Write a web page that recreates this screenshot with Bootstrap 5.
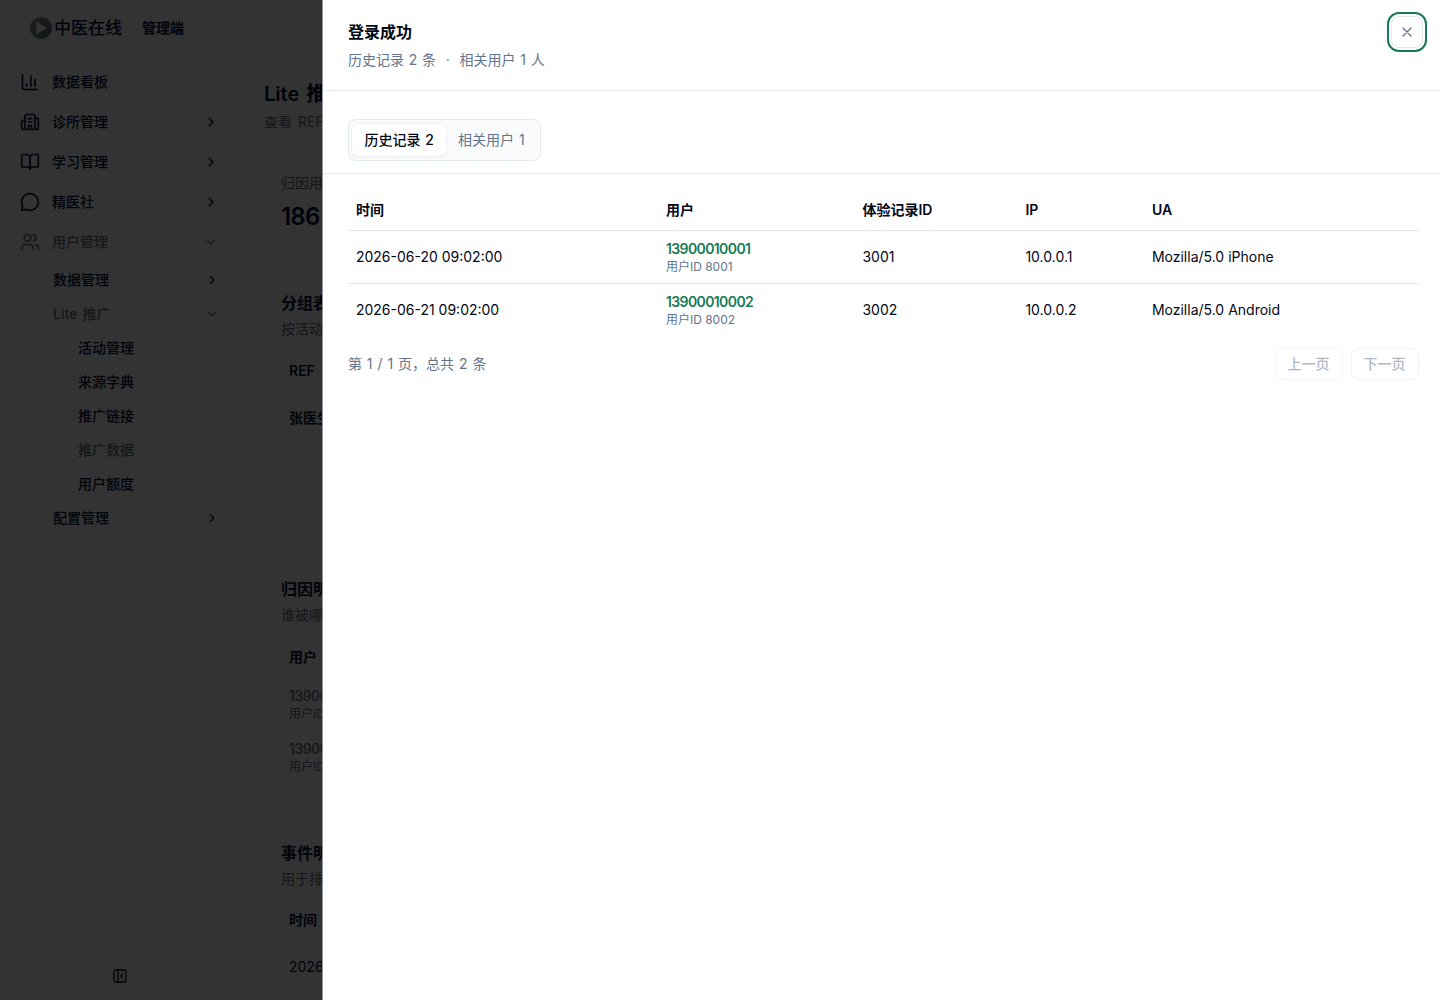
<!DOCTYPE html>
<html lang="zh-CN">
<head>
<meta charset="utf-8">
<meta name="viewport" content="width=device-width, initial-scale=1">
<title>中医在线 管理端</title>
<link href="https://cdn.jsdelivr.net/npm/bootstrap@5.3.0/dist/css/bootstrap.min.css" rel="stylesheet">
<style>
:root{--ink:#020817;--deep:#02103a;--muted:#64748b;--line:#e2e8f0;--brand:#167a56}
html,body{height:100%;overflow:hidden}
body{font-family:Inter,"Noto Sans CJK SC",sans-serif;font-size:14px;line-height:20px;color:var(--deep);background:#fff}
.fg-muted{color:var(--muted)}
.fg-brand{color:var(--brand)}
.ico{fill:none;stroke:currentColor;stroke-width:2;stroke-linecap:round;stroke-linejoin:round;flex:none}
.side{width:240px;border-right:1px solid var(--line)}
.topline{height:56px;border-bottom:1px solid var(--line)}
.brand-bar{padding-left:29px}
.brand-text{font-size:17px;font-weight:500;margin-left:1px}
.brand-role{font-weight:600;margin-left:20px}
.nav-list{padding-top:6px}
.nav-main{height:40px;padding:0 20px;font-weight:500}
.nav-sub{height:34px;padding-right:20px;font-weight:500}
.nav-sel{color:#5f7f7b}
.nav-lite{word-spacing:1.5px}
.tree-a{margin-left:28px;padding-left:24px;border-left:1px solid var(--line);margin-top:1px}
.tree-b{border-left:1px solid var(--line);padding-left:24px}
.side-foot{height:49px;border-top:1px solid var(--line)}
.page-body{padding:24px}
.page-h{font-size:20px;line-height:28px;font-weight:600;word-spacing:2px}
.page-sub{word-spacing:2px}
.panel{border:1px solid var(--line);border-radius:12px;padding:16px;white-space:nowrap;overflow:hidden}
.panel-h{font-size:16px;line-height:24px;font-weight:600}
.panel-stat{height:94px}
.panel-group{height:262px}
.panel-list{height:240px}
.stat-n{font-size:24px;line-height:32px;font-weight:600;letter-spacing:-.8px}
.cellrow{border-bottom:1px solid var(--line);padding:0 8px}
.row-head{height:41px;margin-top:12px;font-weight:600}
.row-head.row-event{margin-top:11px}
.row-item{height:53px}
.row-last{height:51px}
.tight-num{letter-spacing:-.45px}
.user-link{font-weight:600;letter-spacing:-.6px}
.offcanvas-backdrop.show{opacity:.8}
.offcanvas.drawer{--bs-offcanvas-width:1117.6px;--bs-offcanvas-border-color:#8f969e;--bs-offcanvas-border-width:1px;color:var(--ink)}
.drawer-head{height:91px;padding:20px 13px 0 24.5px;border-bottom:1px solid var(--line)}
.drawer-title{font-size:16px;line-height:24px;font-weight:600}
.sub-line{margin-top:6px;word-spacing:.9px}
.sub-dot{margin:0 4.8px}
.close-x{width:32px;height:32px;margin-top:-4px;margin-right:4.5px;border:1px solid var(--line);border-radius:8px;outline:2px solid var(--brand);outline-offset:2px;color:var(--muted);background:#fff;padding:0}
.tabs-row{height:83px;padding:28px 24.5px 0;border-bottom:1px solid var(--line)}
.seg{height:42px;width:193px;border:1px solid var(--line);border-radius:8px;background:#f9fbfd;padding:4px 3px}
.seg button{border:0;background:none;font-size:14px;font-weight:400;color:var(--muted);border-radius:6px;height:32px;padding:0 11px 0 12px;white-space:nowrap;word-spacing:1.2px}
.seg button.on{background:#fff;color:var(--ink);box-shadow:0 0 0 1px #eef2f6,0 1px 2px rgba(0,0,0,.14);padding:0 12px 0 12.5px}
.drawer-body{padding:16px 21.4px 0 24.5px}
.table.log{--bs-table-bg:transparent;--bs-table-color:var(--ink);table-layout:fixed;color:var(--ink);border-color:var(--line)}
.table.log th{height:40px;padding:0 8px;font-weight:600;vertical-align:middle}
.table.log td{height:53px;padding:0 8px;vertical-align:middle}
.table.log tr:last-child td{border-bottom:0}
.col-time{width:310px}.col-user{width:196.5px}.col-rec{width:163px}.col-ip{width:126.5px}
.small-id{font-size:12px;line-height:16px}
.pg-row{margin-top:12px}
.pg-text{word-spacing:1px}
.pg{height:32px;width:68px;border:1px solid var(--line);border-radius:8px;background:#fff;color:var(--muted);font-size:14px;font-weight:500;opacity:.5;padding:0}
</style>
</head>
<body>
<div class="d-flex h-100">
  <aside class="side d-flex flex-column flex-shrink-0">
    <div class="topline brand-bar d-flex align-items-center flex-shrink-0">
      <svg width="24" height="24" viewBox="0 0 24 24"><defs><linearGradient id="lg" x1="0" y1="0" x2="1" y2="1"><stop offset="0" stop-color="#8fa3a8"/><stop offset="1" stop-color="#4d666c"/></linearGradient></defs><circle cx="12" cy="12" r="11" fill="url(#lg)"/><path d="M8 6.5v11l9-5.5z" fill="#fff" stroke="#fff" stroke-linejoin="round"/></svg>
      <span class="brand-text">中医在线</span>
      <span class="brand-role">管理端</span>
    </div>
    <nav class="nav-list flex-grow-1">
      <div class="nav-main d-flex align-items-center"><svg class="ico me-2" width="20" height="20" viewBox="0 0 24 24"><path d="M3 3v16a2 2 0 0 0 2 2h16M18 17V9M13 17V5M8 17v-3"/></svg><span class="ms-1">数据看板</span></div>
      <div class="nav-main d-flex align-items-center"><svg class="ico me-2" width="20" height="20" viewBox="0 0 24 24"><path d="M10 12h4M10 8h4M14 21v-3a2 2 0 0 0-4 0v3M6 10H4a2 2 0 0 0-2 2v7a2 2 0 0 0 2 2h16a2 2 0 0 0 2-2V9a2 2 0 0 0-2-2h-2M6 21V5a2 2 0 0 1 2-2h8a2 2 0 0 1 2 2v16"/></svg><span class="ms-1">诊所管理</span><svg class="ico ms-auto" width="16" height="16" viewBox="0 0 24 24"><path d="m9 18 6-6-6-6"/></svg></div>
      <div class="nav-main d-flex align-items-center"><svg class="ico me-2" width="20" height="20" viewBox="0 0 24 24"><path d="M12 7v14M3 18a1 1 0 0 1-1-1V4a1 1 0 0 1 1-1h5a4 4 0 0 1 4 4 4 4 0 0 1 4-4h5a1 1 0 0 1 1 1v13a1 1 0 0 1-1 1h-6a3 3 0 0 0-3 3 3 3 0 0 0-3-3z"/></svg><span class="ms-1">学习管理</span><svg class="ico ms-auto" width="16" height="16" viewBox="0 0 24 24"><path d="m9 18 6-6-6-6"/></svg></div>
      <div class="nav-main d-flex align-items-center"><svg class="ico me-2" width="20" height="20" viewBox="0 0 24 24"><path d="M2.992 16.342a2 2 0 0 1 .094 1.167l-1.065 3.29a1 1 0 0 0 1.236 1.168l3.413-.998a2 2 0 0 1 1.099.092 10 10 0 1 0-4.777-4.719"/></svg><span class="ms-1">精医社</span><svg class="ico ms-auto" width="16" height="16" viewBox="0 0 24 24"><path d="m9 18 6-6-6-6"/></svg></div>
      <div class="nav-main nav-sel d-flex align-items-center"><svg class="ico me-2" width="20" height="20" viewBox="0 0 24 24"><path d="M16 21v-2a4 4 0 0 0-4-4H6a4 4 0 0 0-4 4v2M16 3.128a4 4 0 0 1 0 7.744M22 21v-2a4 4 0 0 0-3-3.87"/><circle cx="9" cy="7" r="4"/></svg><span class="ms-1">用户管理</span><svg class="ico ms-auto" width="16" height="16" viewBox="0 0 24 24"><path d="m6 9 6 6 6-6"/></svg></div>
      <div class="tree-a">
        <div class="nav-sub d-flex align-items-center"><span>数据管理</span><svg class="ico ms-auto" width="14" height="14" viewBox="0 0 24 24"><path d="m9 18 6-6-6-6"/></svg></div>
        <div class="nav-sub nav-sel d-flex align-items-center"><span class="nav-lite">Lite 推广</span><svg class="ico ms-auto" width="14" height="14" viewBox="0 0 24 24"><path d="m6 9 6 6 6-6"/></svg></div>
        <div class="tree-b">
          <div class="nav-sub d-flex align-items-center">活动管理</div>
          <div class="nav-sub d-flex align-items-center">来源字典</div>
          <div class="nav-sub d-flex align-items-center">推广链接</div>
          <div class="nav-sub nav-sel d-flex align-items-center">推广数据</div>
          <div class="nav-sub d-flex align-items-center">用户额度</div>
        </div>
        <div class="nav-sub d-flex align-items-center"><span>配置管理</span><svg class="ico ms-auto" width="14" height="14" viewBox="0 0 24 24"><path d="m9 18 6-6-6-6"/></svg></div>
      </div>
    </nav>
    <div class="side-foot d-flex align-items-center justify-content-center flex-shrink-0"><svg class="ico" width="16" height="16" viewBox="0 0 24 24"><rect x="3" y="3" width="18" height="18" rx="2"/><path d="M9 3v18M16 15l-3-3 3-3"/></svg></div>
  </aside>
  <main class="flex-grow-1 overflow-hidden">
    <div class="topline"></div>
    <div class="page-body">
      <div class="page-h">Lite 推广</div>
      <div class="fg-muted page-sub mt-1">查看 REF</div>
      <div class="panel panel-stat mt-4">
        <div class="fg-muted">归因用户</div>
        <div class="stat-n mt-2">186</div>
      </div>
      <div class="panel panel-group mt-4">
        <div class="panel-h">分组表现</div>
        <div class="fg-muted mt-1">按活动</div>
        <div class="cellrow row-head d-flex align-items-center">REF</div>
        <div class="fw-semibold px-2 pt-3">张医生</div>
      </div>
      <div class="panel panel-list mt-4">
        <div class="panel-h">归因明细</div>
        <div class="fg-muted mt-1">谁被哪</div>
        <div class="cellrow row-head d-flex align-items-center">用户</div>
        <div class="cellrow row-item d-flex flex-column justify-content-center fg-muted"><span class="tight-num fw-medium">13900010001</span><span class="small-id">用户ID 8001</span></div>
        <div class="px-2 row-last d-flex flex-column justify-content-center fg-muted"><span class="tight-num fw-medium">13900010002</span><span class="small-id">用户ID 8002</span></div>
      </div>
      <div class="panel panel-list mt-4">
        <div class="panel-h">事件明细</div>
        <div class="fg-muted mt-1">用于排</div>
        <div class="cellrow row-head row-event d-flex align-items-center">时间</div>
        <div class="cellrow row-item d-flex align-items-center">2026-06-21</div>
      </div>
    </div>
  </main>
</div>
<div class="offcanvas-backdrop show"></div>
<div class="offcanvas offcanvas-end show drawer" tabindex="-1" data-bs-backdrop="false" data-bs-scroll="true">
  <div class="drawer-head d-flex justify-content-between align-items-start flex-shrink-0">
    <div>
      <div class="drawer-title">登录成功</div>
      <div class="fg-muted sub-line">历史记录 2 条 <span class="sub-dot">·</span> 相关用户 1 人</div>
    </div>
    <button class="close-x d-flex align-items-center justify-content-center" type="button" aria-label="关闭"><svg class="ico" width="16" height="16" viewBox="0 0 24 24"><path d="M18 6 6 18M6 6l12 12"/></svg></button>
  </div>
  <div class="tabs-row flex-shrink-0">
    <div class="seg d-inline-flex"><button class="on fw-medium" type="button">历史记录 2</button><button type="button">相关用户 1</button></div>
  </div>
  <div class="drawer-body">
    <table class="table log mb-0">
      <colgroup><col class="col-time"><col class="col-user"><col class="col-rec"><col class="col-ip"><col></colgroup>
      <thead><tr><th>时间</th><th>用户</th><th>体验记录ID</th><th>IP</th><th>UA</th></tr></thead>
      <tbody>
        <tr><td>2026-06-20 09:02:00</td><td><div class="fg-brand user-link">13900010001</div><div class="small-id fg-muted">用户ID 8001</div></td><td>3001</td><td>10.0.0.1</td><td>Mozilla/5.0 iPhone</td></tr>
        <tr><td>2026-06-21 09:02:00</td><td><div class="fg-brand user-link">13900010002</div><div class="small-id fg-muted">用户ID 8002</div></td><td>3002</td><td>10.0.0.2</td><td>Mozilla/5.0 Android</td></tr>
      </tbody>
    </table>
    <div class="pg-row d-flex justify-content-between align-items-center">
      <span class="fg-muted pg-text">第 1 / 1 页，总共 2 条</span>
      <div class="d-flex gap-2"><button class="pg" type="button" disabled>上一页</button><button class="pg" type="button" disabled>下一页</button></div>
    </div>
  </div>
</div>
<script src="https://cdn.jsdelivr.net/npm/bootstrap@5.3.0/dist/js/bootstrap.bundle.min.js"></script>
</body>
</html>
